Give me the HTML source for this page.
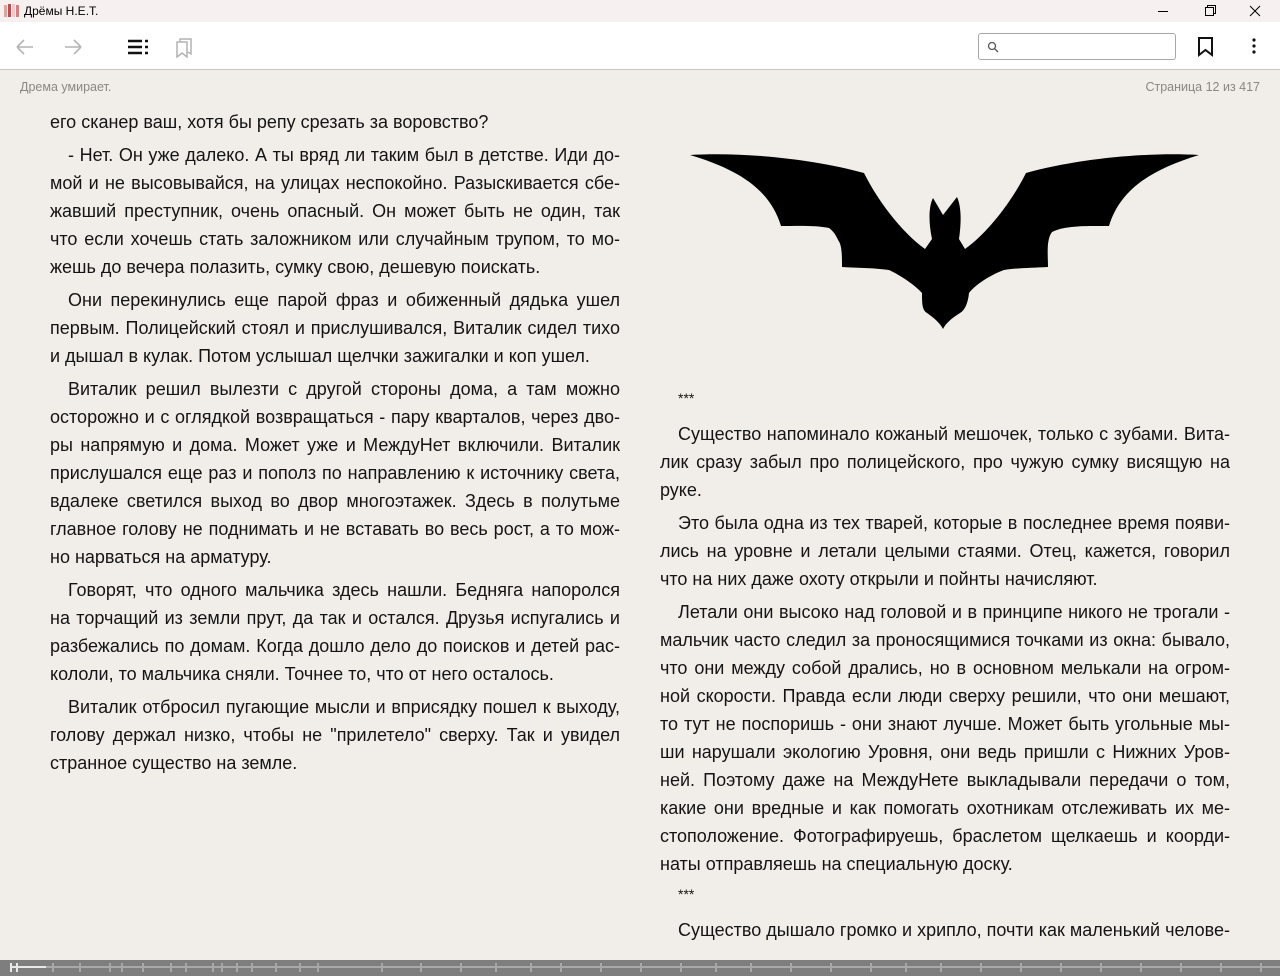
<!DOCTYPE html>
<html><head><meta charset="utf-8"><style>
*{margin:0;padding:0;box-sizing:border-box}
body{width:1280px;height:976px;overflow:hidden;background:#f1eee9;font-family:"Liberation Sans",Arial,sans-serif;position:relative}
.title{position:absolute;left:0;top:0;width:1280px;height:22px;background:#f7f0f0;font-size:12px;color:#000}
.tb{position:absolute;left:0;top:22px;width:1280px;height:48px;background:#fff;border-bottom:1px solid #c8c8c8}
.hdr{position:absolute;top:80px;font-size:12.5px;color:#8c8680}
.col{position:absolute;font-size:18px;line-height:28px;color:#141414}
.col div{white-space:nowrap;height:28px}
.j{text-align:justify;text-align-last:justify}
.p{margin-top:5px}
.i{padding-left:18px}
.bar{position:absolute;left:0;top:960px;width:1280px;height:16px;background:#7e7e7e}
</style></head><body>
<div class="title">
 <svg style="position:absolute;left:4px;top:4px" width="16" height="14"><rect x="0" y="1" width="3" height="12" fill="#e5a0a0"/><rect x="4" y="0" width="3" height="13" fill="#c84848"/><rect x="8" y="0" width="3" height="13" fill="#f0c8c8"/><rect x="12" y="1" width="3" height="12" fill="#e07a7a"/></svg>
 <span style="position:absolute;left:24px;top:4px">Дрёмы Н.Е.Т.</span>
 <svg style="position:absolute;left:1150px;top:4px" width="120" height="14" fill="none" stroke="#000" stroke-width="1"><line x1="8" y1="7.5" x2="18" y2="7.5"/><rect x="55.5" y="3.5" width="8" height="8"/><path d="M57.5 3.5V1.5H65.5V9.5H63.5"/><path d="M100 2L110 12M110 2L100 12"/></svg>
</div>
<div class="tb">
 <svg style="position:absolute;left:14px;top:14px" width="200" height="22" fill="none" stroke-width="1.6">
  <path d="M3 11H19M3 11L10 4M3 11L10 18" stroke="#b4b4b4"/>
  <path d="M51 11H67M67 11L60 4M67 11L60 18" stroke="#b4b4b4"/>
  <path d="M114 5H128M114 11H128M114 17H128" stroke="#111" stroke-width="2.4"/>
  <path d="M131 5H134M131 11H134M131 17H134" stroke="#111" stroke-width="2.4"/>
  <path d="M163 6V21L168 17L173 21V6Z M166 6V3H177V18L174 16" stroke="#b4b4b4" stroke-width="1.5"/>
 </svg>
 <div style="position:absolute;left:978px;top:11px;width:198px;height:27px;border:1px solid #a8a8a8;border-radius:3px;background:#fff">
  <svg style="position:absolute;left:8px;top:7px" width="12" height="12" fill="none" stroke="#555" stroke-width="1.3"><circle cx="5" cy="5" r="3.5"/><path d="M7.5 7.5L11 11"/></svg>
 </div>
 <svg style="position:absolute;left:1196px;top:14px" width="70" height="22" fill="none" stroke="#111" stroke-width="2"><path d="M3 2H16V19L9.5 14L3 19Z"/><circle cx="58" cy="4" r="1.6" fill="#111" stroke="none"/><circle cx="58" cy="10" r="1.6" fill="#111" stroke="none"/><circle cx="58" cy="16" r="1.6" fill="#111" stroke="none"/></svg>
</div>
<div class="hdr" style="left:20px">Дрема умирает.</div>
<div class="hdr" style="right:20px">Страница 12 из 417</div>

<div class="col" style="left:50px;top:108px;width:570px">
<div>его сканер ваш, хотя бы репу срезать за воровство?</div>
<div class="j i p">- Нет. Он уже далеко. А ты вряд ли таким был в детстве. Иди до-</div>
<div class="j">мой и не высовывайся, на улицах неспокойно. Разыскивается сбе-</div>
<div class="j">жавший преступник, очень опасный. Он может быть не один, так</div>
<div class="j">что если хочешь стать заложником или случайным трупом, то мо-</div>
<div>жешь до вечера полазить, сумку свою, дешевую поискать.</div>
<div class="j i p">Они перекинулись еще парой фраз и обиженный дядька ушел</div>
<div class="j">первым. Полицейский стоял и прислушивался, Виталик сидел тихо</div>
<div>и дышал в кулак. Потом услышал щелчки зажигалки и коп ушел.</div>
<div class="j i p">Виталик решил вылезти с другой стороны дома, а там можно</div>
<div class="j">осторожно и с оглядкой возвращаться - пару кварталов, через дво-</div>
<div class="j">ры напрямую и дома. Может уже и МеждуНет включили. Виталик</div>
<div class="j">прислушался еще раз и пополз по направлению к источнику света,</div>
<div class="j">вдалеке светился выход во двор многоэтажек. Здесь в полутьме</div>
<div class="j">главное голову не поднимать и не вставать во весь рост, а то мож-</div>
<div>но нарваться на арматуру.</div>
<div class="j i p">Говорят, что одного мальчика здесь нашли. Бедняга напоролся</div>
<div class="j">на торчащий из земли прут, да так и остался. Друзья испугались и</div>
<div class="j">разбежались по домам. Когда дошло дело до поисков и детей рас-</div>
<div>кололи, то мальчика сняли. Точнее то, что от него осталось.</div>
<div class="j i p">Виталик отбросил пугающие мысли и вприсядку пошел к выходу,</div>
<div class="j">голову держал низко, чтобы не "прилетело" сверху. Так и увидел</div>
<div>странное существо на земле.</div>
</div>

<svg style="position:absolute;left:680px;top:140px" width="530" height="200" viewBox="680 140 530 200">
<path fill="#000" d="M690 155C740 152 810 158 864 173C880 205 905 235 925 249L932 239C929 225 928 208 933 198L943 215L957 197C962 208 961 225 959 239L965 249C985 235 1010 205 1026 173C1080 158 1150 152 1199 155C1150 170 1120 190 1109 226C1090 226 1065 225 1052 232C1046 240 1048 255 1048 267C1030 268 1015 268 1004 270C990 275 975 285 969 293C968 303 965 310 960 313C952 318 946 323 943 329C940 323 934 318 927 313C922 310 922 303 922 293C915 285 900 275 889 270C875 268 860 268 842 267C842 255 842 245 838 240C835 232 829 228 829 228C815 225 795 226 781 226C770 190 740 170 690 155Z"/>
</svg>

<div class="col" style="left:660px;top:384px;width:570px">
<div style="padding-left:18px;font-size:14px">***</div>
<div class="j i" style="margin-top:8px">Существо напоминало кожаный мешочек, только с зубами. Вита-</div>
<div class="j">лик сразу забыл про полицейского, про чужую сумку висящую на</div>
<div>руке.</div>
<div class="j i p">Это была одна из тех тварей, которые в последнее время появи-</div>
<div class="j">лись на уровне и летали целыми стаями. Отец, кажется, говорил</div>
<div>что на них даже охоту открыли и пойнты начисляют.</div>
<div class="j i p">Летали они высоко над головой и в принципе никого не трогали -</div>
<div class="j">мальчик часто следил за проносящимися точками из окна: бывало,</div>
<div class="j">что они между собой дрались, но в основном мелькали на огром-</div>
<div class="j">ной скорости. Правда если люди сверху решили, что они мешают,</div>
<div class="j">то тут не поспоришь - они знают лучше. Может быть угольные мы-</div>
<div class="j">ши нарушали экологию Уровня, они ведь пришли с Нижних Уров-</div>
<div class="j">ней. Поэтому даже на МеждуНете выкладывали передачи о том,</div>
<div class="j">какие они вредные и как помогать охотникам отслеживать их ме-</div>
<div class="j">стоположение. Фотографируешь, браслетом щелкаешь и коорди-</div>
<div>наты отправляешь на специальную доску.</div>
<div style="padding-left:18px;font-size:14px;margin-top:2px">***</div>
<div class="j i" style="margin-top:8px">Существо дышало громко и хрипло, почти как маленький челове-</div>
</div>

<div class="bar">
<svg width="1280" height="16" style="position:absolute;left:0;top:0">
<rect x="10" y="6" width="1270" height="2" fill="#a8a8a8"/>
<rect x="10" y="6" width="36" height="2" fill="#e8e8e8"/>
<rect x="10" y="3" width="2" height="9" fill="#e8e8e8"/>
<rect x="16" y="3" width="2" height="9" fill="#e8e8e8"/>
<g fill="#a8a8a8">
<rect x="52" y="3" width="2" height="9"/><rect x="79" y="3" width="2" height="9"/><rect x="109" y="3" width="2" height="9"/><rect x="121" y="3" width="2" height="9"/><rect x="142" y="3" width="2" height="9"/><rect x="170" y="3" width="2" height="9"/><rect x="185" y="3" width="2" height="9"/><rect x="212" y="3" width="2" height="9"/><rect x="221" y="3" width="2" height="9"/><rect x="236" y="3" width="2" height="9"/><rect x="251" y="3" width="2" height="9"/><rect x="275" y="3" width="2" height="9"/><rect x="299" y="3" width="2" height="9"/><rect x="317" y="3" width="2" height="9"/><rect x="381" y="3" width="2" height="9"/>
<rect x="420" y="3" width="2" height="9"/><rect x="460" y="3" width="2" height="9"/><rect x="495" y="3" width="2" height="9"/><rect x="530" y="3" width="2" height="9"/><rect x="560" y="3" width="2" height="9"/><rect x="600" y="3" width="2" height="9"/><rect x="640" y="3" width="2" height="9"/><rect x="680" y="3" width="2" height="9"/><rect x="715" y="3" width="2" height="9"/><rect x="750" y="3" width="2" height="9"/><rect x="790" y="3" width="2" height="9"/><rect x="830" y="3" width="2" height="9"/><rect x="870" y="3" width="2" height="9"/><rect x="905" y="3" width="2" height="9"/><rect x="940" y="3" width="2" height="9"/><rect x="980" y="3" width="2" height="9"/><rect x="1020" y="3" width="2" height="9"/><rect x="1060" y="3" width="2" height="9"/><rect x="1100" y="3" width="2" height="9"/><rect x="1140" y="3" width="2" height="9"/><rect x="1180" y="3" width="2" height="9"/><rect x="1220" y="3" width="2" height="9"/><rect x="1260" y="3" width="2" height="9"/>
</g></svg>
</div>
</body></html>
